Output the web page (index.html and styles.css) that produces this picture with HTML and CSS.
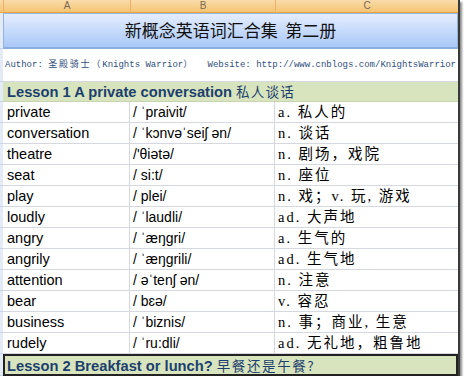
FILE: index.html
```html
<!DOCTYPE html>
<html lang="en">
<head>
    <meta charset="UTF-8">
    <title>新概念英语词汇合集 第二册</title>
    <link rel="stylesheet" href="styles.css">
</head>
<body>
    <div class="sheet">
        <!-- column headers -->
        <div class="corner"></div>
        <div class="colhead">A</div>
        <div class="colhead">B</div>
        <div class="colhead last">C</div>

        <div class="rowhead"></div>
        <div class="title">新概念英语词汇合集&nbsp;&nbsp;第二册</div>

        <div class="rowhead"></div>
        <div class="author">
            <span>Author: <span class="wide">圣殿骑士（</span>Knights Warrior<span class="wide">）</span></span>
            <span>Website: http://www.cnblogs.com/KnightsWarrior</span>
        </div>

        <div class="rowhead"></div>
        <div class="lesson">Lesson 1 A private conversation <span class="cn">私人谈话</span></div>

        <div class="rowhead"></div><div class="cell word">private</div><div class="cell phon">/ ˈpraivit/</div><div class="cell mean">a. 私人的</div>
        <div class="rowhead"></div><div class="cell word">conversation</div><div class="cell phon">/ ˈkɔnvəˈseiʃ ən/</div><div class="cell mean">n. 谈话</div>
        <div class="rowhead"></div><div class="cell word">theatre</div><div class="cell phon">/'θiətə/</div><div class="cell mean">n. 剧场，戏院</div>
        <div class="rowhead"></div><div class="cell word">seat</div><div class="cell phon">/ si:t/</div><div class="cell mean">n. 座位</div>
        <div class="rowhead"></div><div class="cell word">play</div><div class="cell phon">/ plei/</div><div class="cell mean">n. 戏；v. 玩, 游戏</div>
        <div class="rowhead"></div><div class="cell word">loudly</div><div class="cell phon">/ ˈlaudli/</div><div class="cell mean">ad. 大声地</div>
        <div class="rowhead"></div><div class="cell word">angry</div><div class="cell phon">/ ˈæŋgri/</div><div class="cell mean">a. 生气的</div>
        <div class="rowhead"></div><div class="cell word">angrily</div><div class="cell phon">/ ˈæŋgrili/</div><div class="cell mean">ad. 生气地</div>
        <div class="rowhead"></div><div class="cell word">attention</div><div class="cell phon">/ əˈtenʃ ən/</div><div class="cell mean">n. 注意</div>
        <div class="rowhead"></div><div class="cell word">bear</div><div class="cell phon">/ bɛə/</div><div class="cell mean">v. 容忍</div>
        <div class="rowhead"></div><div class="cell word">business</div><div class="cell phon">/ ˈbiznis/</div><div class="cell mean">n. 事；商业, 生意</div>
        <div class="rowhead"></div><div class="cell word">rudely</div><div class="cell phon">/ ˈru:dli/</div><div class="cell mean">ad. 无礼地，粗鲁地</div>

        <div class="rowhead"></div>
        <div class="lesson selected">Lesson 2 Breakfast or lunch? <span class="cn">早餐还是午餐?</span></div>
    </div>
</body>
</html>
```

FILE: styles.css
```css
body {
    margin: 0;
    background: #fff;
    font-family: "Liberation Sans", Arial, "Noto Sans CJK SC", sans-serif;
    overflow: hidden;
}
.sheet {
    display: grid;
    grid-template-columns: 3px 127px 145px 183px;
    grid-template-rows: 13px 36px 33px 20px repeat(12, 21px) 22px;
    width: 458px;
    border-right: 2px solid #3a3a3a;
    box-shadow: 2px 2px 2px rgba(0, 0, 0, 0.45);
    background: #fff;
}
.corner {
    background: linear-gradient(#f9dcab, #f5c474);
    border-bottom: 1px solid #e9a640;
}
.colhead {
    background: linear-gradient(#f9dcab, #f5c474);
    border-bottom: 1px solid #e9a640;
    border-left: 1px solid #eab46a;
    color: #7a6a55;
    font-size: 10px;
    line-height: 12px;
    text-align: center;
}
.rowhead {
    grid-column: 1;
    background: #e3ebf7;
    border-bottom: 1px solid #c7d3e6;
}
.title {
    grid-column: 2 / 5;
    background: linear-gradient(#e4edfd, #a9c8f8);
    border: 1px solid #94b5e3;
    border-bottom: 2px solid #8aaedd;
    font-family: "Noto Sans CJK SC", sans-serif;
    font-size: 17px;
    line-height: 32px;
    text-align: center;
    color: #111;
}
.author {
    grid-column: 2 / 5;
    display: flex;
    justify-content: space-between;
    padding: 0 2px 0 2px;
    font-family: "Liberation Mono", "Noto Sans CJK SC", monospace;
    font-size: 9px;
    line-height: 33px;
    color: #2f4f7c;
    white-space: nowrap;
    border-bottom: 1px solid #d5d9df;
}
.author .wide {
    letter-spacing: 1.8px;
}
.lesson {
    grid-column: 2 / 5;
    background: #d8e4bd;
    color: #1c3f6e;
    font-weight: bold;
    font-size: 14.7px;
    line-height: 19px;
    padding-left: 4px;
    border-bottom: 1px solid #c9d3b2;
}
.lesson .cn {
    font-family: "Noto Sans CJK SC", sans-serif;
    font-weight: normal;
    font-size: 13.5px;
    letter-spacing: 1.2px;
}
.lesson.selected {
    border: 2px solid #222;
    line-height: 18px;
    padding-left: 2px;
}
.lesson.selected .cn {
    letter-spacing: 1.6px;
}
.cell {
    border-bottom: 1px solid #d5d9df;
    border-right: 1px solid #d5d9df;
    line-height: 20px;
    white-space: nowrap;
    overflow: hidden;
    color: #000;
}
.word {
    font-size: 14.5px;
    padding-left: 4px;
}
.phon {
    font-size: 14px;
    padding-left: 3px;
}
.mean {
    font-family: "Liberation Serif", "Noto Sans CJK SC", serif;
    font-size: 14.5px;
    letter-spacing: 2px;
    padding-left: 3px;
    border-right: none;
}
```
